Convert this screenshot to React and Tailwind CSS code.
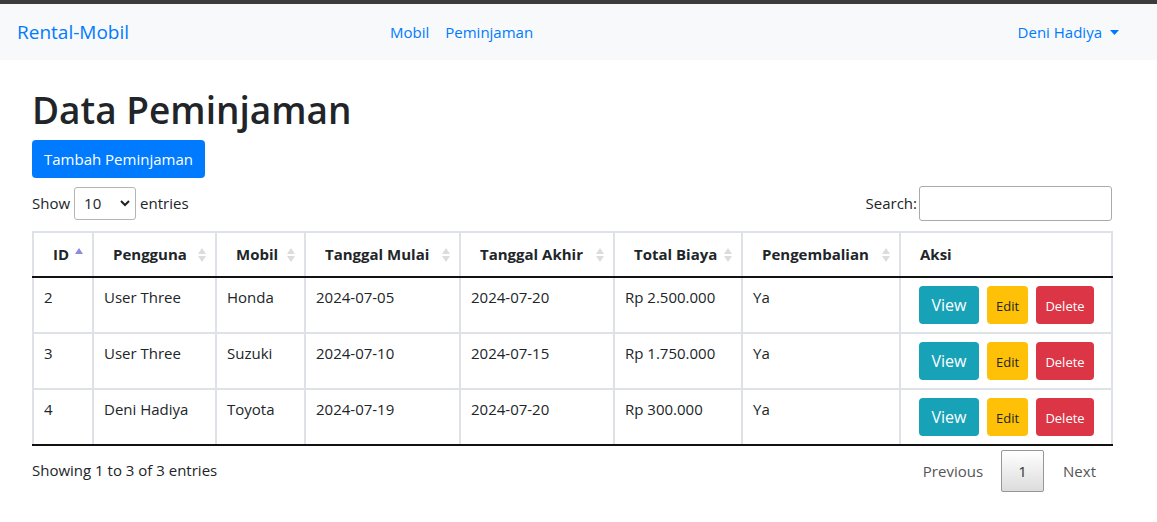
import React, { useState } from 'react';

const rows = [
  { id: 2, user: 'User Three', mobil: 'Honda', mulai: '2024-07-05', akhir: '2024-07-20', biaya: 'Rp 2.500.000', kembali: 'Ya' },
  { id: 3, user: 'User Three', mobil: 'Suzuki', mulai: '2024-07-10', akhir: '2024-07-15', biaya: 'Rp 1.750.000', kembali: 'Ya' },
  { id: 4, user: 'Deni Hadiya', mobil: 'Toyota', mulai: '2024-07-19', akhir: '2024-07-20', biaya: 'Rp 300.000', kembali: 'Ya' },
];

const columns = [
  { label: 'ID', w: 'w-[60px]', active: true },
  { label: 'Pengguna', w: 'w-[123px]' },
  { label: 'Mobil', w: 'w-[89px]' },
  { label: 'Tanggal Mulai', w: 'w-[155px]' },
  { label: 'Tanggal Akhir', w: 'w-[154px]' },
  { label: 'Total Biaya', w: 'w-[128px]' },
  { label: 'Pengembalian', w: 'w-[158px]' },
];

function SortIcon({ active }) {
  return (
    <svg width="8" height="14" viewBox="0 0 8 14" className="absolute right-[9px] top-[15px]">
      <path d="M4 0 L8 6 L0 6 Z" fill={active ? '#8c8cdc' : '#dcdcdc'} />
      {!active && <path d="M4 14 L8 8 L0 8 Z" fill="#dcdcdc" />}
    </svg>
  );
}

export default function App() {
  const [search, setSearch] = useState('');

  return (
    <div className="min-h-[522px] bg-white text-[#212529] font-['Open_Sans',sans-serif]">
      <div className="h-[4px] bg-[#3c3c3c]" />
      <nav className="h-[56px] bg-[#f8f9fa] flex items-center px-[17px]">
        <a className="text-[19px] text-[#007bff] w-[373px]">Rental-Mobil</a>
        <div className="flex gap-[16px] text-[15px] text-[#007bff]">
          <a>Mobil</a>
          <a>Peminjaman</a>
        </div>
        <div className="ml-auto flex items-center gap-[8px] pr-[21px] text-[15px] text-[#007bff]">
          <span>Deni Hadiya</span>
          <svg width="9" height="5" viewBox="0 0 9 5"><path d="M0 0 L9 0 L4.5 5 Z" fill="#007bff" /></svg>
        </div>
      </nav>

      <main className="px-[32px] pt-[26px] w-[1146px]">
        <h1 className="text-[37px] leading-[48px] font-semibold">Data Peminjaman</h1>
        <button className="mt-[6px] h-[38px] px-[12px] rounded-[4px] bg-[#007bff] text-white text-[15px]">
          Tambah Peminjaman
        </button>

        <div className="flex items-center justify-between mt-[8px] text-[15px] w-[1081px]">
          <label className="flex items-center gap-[4px]">
            Show
            <span className="relative w-[62px] h-[33px] border border-[#b5b5b5] rounded-[3px] flex items-center pl-[9px]">
              10
              <svg width="10" height="7" viewBox="0 0 10 7" className="absolute right-[5px] top-[12px]">
                <path d="M1 1 L5 5 L9 1" stroke="#222" strokeWidth="2" fill="none" />
              </svg>
            </span>
            entries
          </label>
          <label className="flex items-center gap-[2px] pr-[1px]">
            Search:
            <input
              value={search}
              onChange={(e) => setSearch(e.target.value)}
              className="w-[193px] h-[35px] border border-[#aaa] rounded-[3px] outline-none px-2"
            />
          </label>
        </div>

        <table className="mt-[10px] w-[1081px] border-collapse text-[15px]">
          <thead>
            <tr className="h-[45px]">
              {columns.map((c) => (
                <th key={c.label} className={`${c.w} relative border-2 border-[#dee2e6] border-b-[#111] border-b-2 pl-[19px] text-left font-bold`}>
                  {c.label}
                  <SortIcon active={c.active} />
                </th>
              ))}
              <th className="border-2 border-[#dee2e6] border-b-[#111] pl-[19px] text-left font-bold">Aksi</th>
            </tr>
          </thead>
          <tbody>
            {rows.map((r, i) => (
              <tr key={r.id} className="h-[56px]">
                {[r.id, r.user, r.mobil, r.mulai, r.akhir, r.biaya, r.kembali].map((v, j) => (
                  <td key={j} className={`border-2 border-[#dee2e6] px-[10px] pt-[8px] align-top ${i === rows.length - 1 ? 'border-b-[#111]' : ''}`}>
                    {v}
                  </td>
                ))}
                <td className={`border-2 border-[#dee2e6] pl-[18px] ${i === rows.length - 1 ? 'border-b-[#111]' : ''}`}>
                  <div className="flex gap-[8px]">
                    <button className="h-[38px] w-[60px] rounded-[4px] bg-[#17a2b8] text-white text-[16px]">View</button>
                    <button className="h-[38px] w-[41px] pt-[3px] rounded-[4px] bg-[#ffc107] text-[#212529] text-[13px]">Edit</button>
                    <button className="h-[38px] w-[58px] pt-[3px] rounded-[4px] bg-[#dc3545] text-white text-[13px]">Delete</button>
                  </div>
                </td>
              </tr>
            ))}
          </tbody>
        </table>

        <div className="flex items-center justify-between mt-[4px] text-[15px] w-[1081px]">
          <span className="-mt-[2px]">Showing 1 to 3 of 3 entries</span>
          <div className="flex items-center pr-[17px] text-[#555]">
            <span className="px-[13px]">Previous</span>
            <span className="mx-[5px] h-[42px] w-[43px] flex items-center justify-center border border-[#979797] rounded-[2px] bg-gradient-to-b from-white to-[#dcdcdc] text-[#333]">1</span>
            <span className="pl-[14px]">Next</span>
          </div>
        </div>
      </main>
    </div>
  );
}
